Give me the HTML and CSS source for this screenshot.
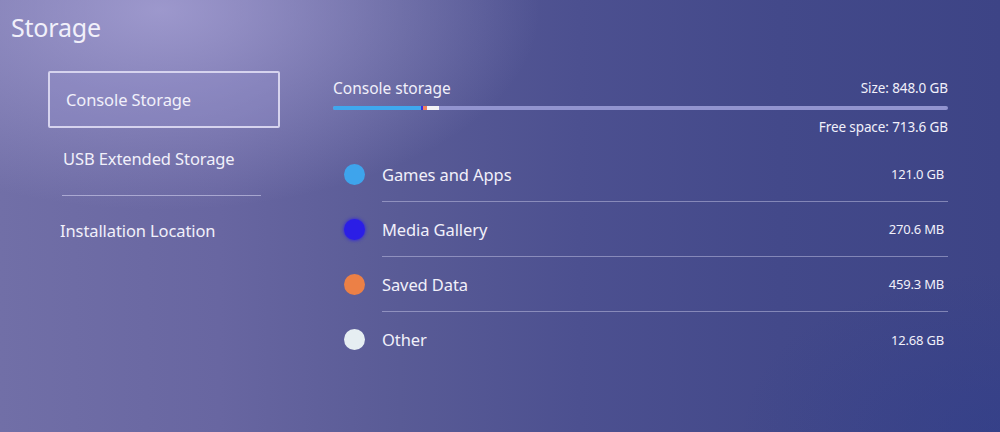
FILE: index.html
```html
<!DOCTYPE html>
<html lang="en">
<head>
<meta charset="utf-8">
<title>Storage</title>
<link rel="stylesheet" href="styles.css">
</head>
<body>
<div class="screen">
  <h1 class="title">Storage</h1>
  <div class="content">
    <nav class="nav">
      <div class="nav-item selected">Console Storage</div>
      <div class="nav-item usb">USB Extended Storage</div>
      <div class="nav-divider"></div>
      <div class="nav-item install">Installation Location</div>
    </nav>
    <section class="panel">
      <div class="panel-head">
        <span class="panel-title">Console storage</span>
        <span class="meta">Size: 848.0 GB</span>
      </div>
      <div class="bar">
        <span class="seg seg-games"></span>
        <span class="seg seg-media"></span>
        <span class="seg seg-saved"></span>
        <span class="seg seg-other"></span>
      </div>
      <div class="free"><span class="meta">Free space: 713.6 GB</span></div>
      <ul class="list">
        <li class="row"><span class="dot dot-games"></span><div class="info"><span class="label">Games and Apps</span><span class="value">121.0 GB</span></div></li>
        <li class="row"><span class="dot dot-media"></span><div class="info"><span class="label">Media Gallery</span><span class="value">270.6 MB</span></div></li>
        <li class="row"><span class="dot dot-saved"></span><div class="info"><span class="label">Saved Data</span><span class="value">459.3 MB</span></div></li>
        <li class="row last"><span class="dot dot-other"></span><div class="info"><span class="label">Other</span><span class="value">12.68 GB</span></div></li>
      </ul>
    </section>
  </div>
</div>
</body>
</html>
```

FILE: styles.css
```css
html, body {
  margin: 0;
  padding: 0;
}
body {
  width: 1000px;
  height: 432px;
  overflow: hidden;
  font-family: "Noto Sans", "Open Sans", sans-serif;
  color: #f1f0fa;
}
.screen {
  width: 1000px;
  height: 432px;
  box-sizing: border-box;
  background:
    radial-gradient(ellipse 380px 200px at 160px 10px, rgba(178, 172, 222, 0.7), rgba(178, 172, 222, 0) 100%),
    radial-gradient(ellipse 260px 160px at 1000px 432px, rgba(44, 60, 140, 0.45), rgba(44, 60, 140, 0) 100%),
    linear-gradient(90deg, #716fa7 0%, #6866a1 22%, #595b96 40%, #4c5090 58%, #43498a 78%, #3d4486 100%);
}
.title {
  margin: 0;
  padding: 12px 0 0 11px;
  height: 42px;
  box-sizing: border-box;
  font-size: 25px;
  line-height: 30px;
  font-weight: 400;
  letter-spacing: -0.2px;
}
.content {
  display: flex;
  margin-top: 29px;
}
.nav {
  margin-left: 48px;
  width: 232px;
  display: flex;
  flex-direction: column;
}
.nav-item {
  display: flex;
  align-items: center;
  height: 60px;
  font-size: 16.5px;
  letter-spacing: -0.1px;
}
.nav-item.selected {
  height: 57px;
  box-sizing: border-box;
  border: 2px solid #d6d3ee;
  border-radius: 2px;
  background: rgba(150, 146, 205, 0.3);
  padding-left: 16px;
}
.nav-item.usb {
  padding-left: 15px;
}
.nav-divider {
  margin: 7px 19px 0 14px;
  height: 1px;
  background: rgba(220, 218, 245, 0.55);
}
.nav-item.install {
  padding-left: 12px;
  height: 68px;
}
.panel {
  margin-left: 53px;
  width: 615px;
  display: flex;
  flex-direction: column;
}
.panel-head {
  display: flex;
  justify-content: space-between;
  align-items: center;
  padding-top: 6px;
  height: 28px;
  box-sizing: border-box;
}
.panel-title {
  font-size: 15.5px;
  line-height: 22px;
}
.meta {
  font-size: 13.5px;
  line-height: 18px;
  letter-spacing: -0.1px;
}
.bar {
  margin-top: 7px;
  height: 4px;
  border-radius: 2px;
  background: #9294cf;
  display: flex;
  overflow: hidden;
}
.seg {
  display: block;
  height: 100%;
}
.seg-games { width: 88px; background: #3fa8ee; }
.seg-media { width: 2px; background: #3a2ee0; }
.seg-saved { width: 4px; background: #ee8060; }
.seg-other { width: 12px; background: #f2f2f6; }
.free {
  margin-top: 8px;
  display: flex;
  justify-content: flex-end;
}
.list {
  list-style: none;
  margin: 11px 0 0 0;
  padding: 0;
}
.row {
  display: flex;
  align-items: center;
}
.dot {
  flex: none;
  width: 21px;
  height: 21px;
  border-radius: 50%;
  margin-left: 11px;
  margin-right: 17px;
}
.dot-games { background: #3ea4ec; }
.dot-media { background: #2b1ee6; box-shadow: 0 0 3px 1px rgba(43, 30, 230, 0.6); }
.dot-saved { background: #ec8046; }
.dot-other { background: #e6eef2; }
.info {
  flex: 1;
  height: 55px;
  box-sizing: border-box;
  border-bottom: 1px solid rgba(210, 210, 240, 0.45);
  display: flex;
  align-items: center;
  justify-content: space-between;
  padding-right: 4px;
}
.row.last .info {
  border-bottom: none;
}
.label {
  font-size: 16.5px;
  letter-spacing: -0.1px;
}
.value {
  font-size: 13px;
  letter-spacing: -0.2px;
}
```
